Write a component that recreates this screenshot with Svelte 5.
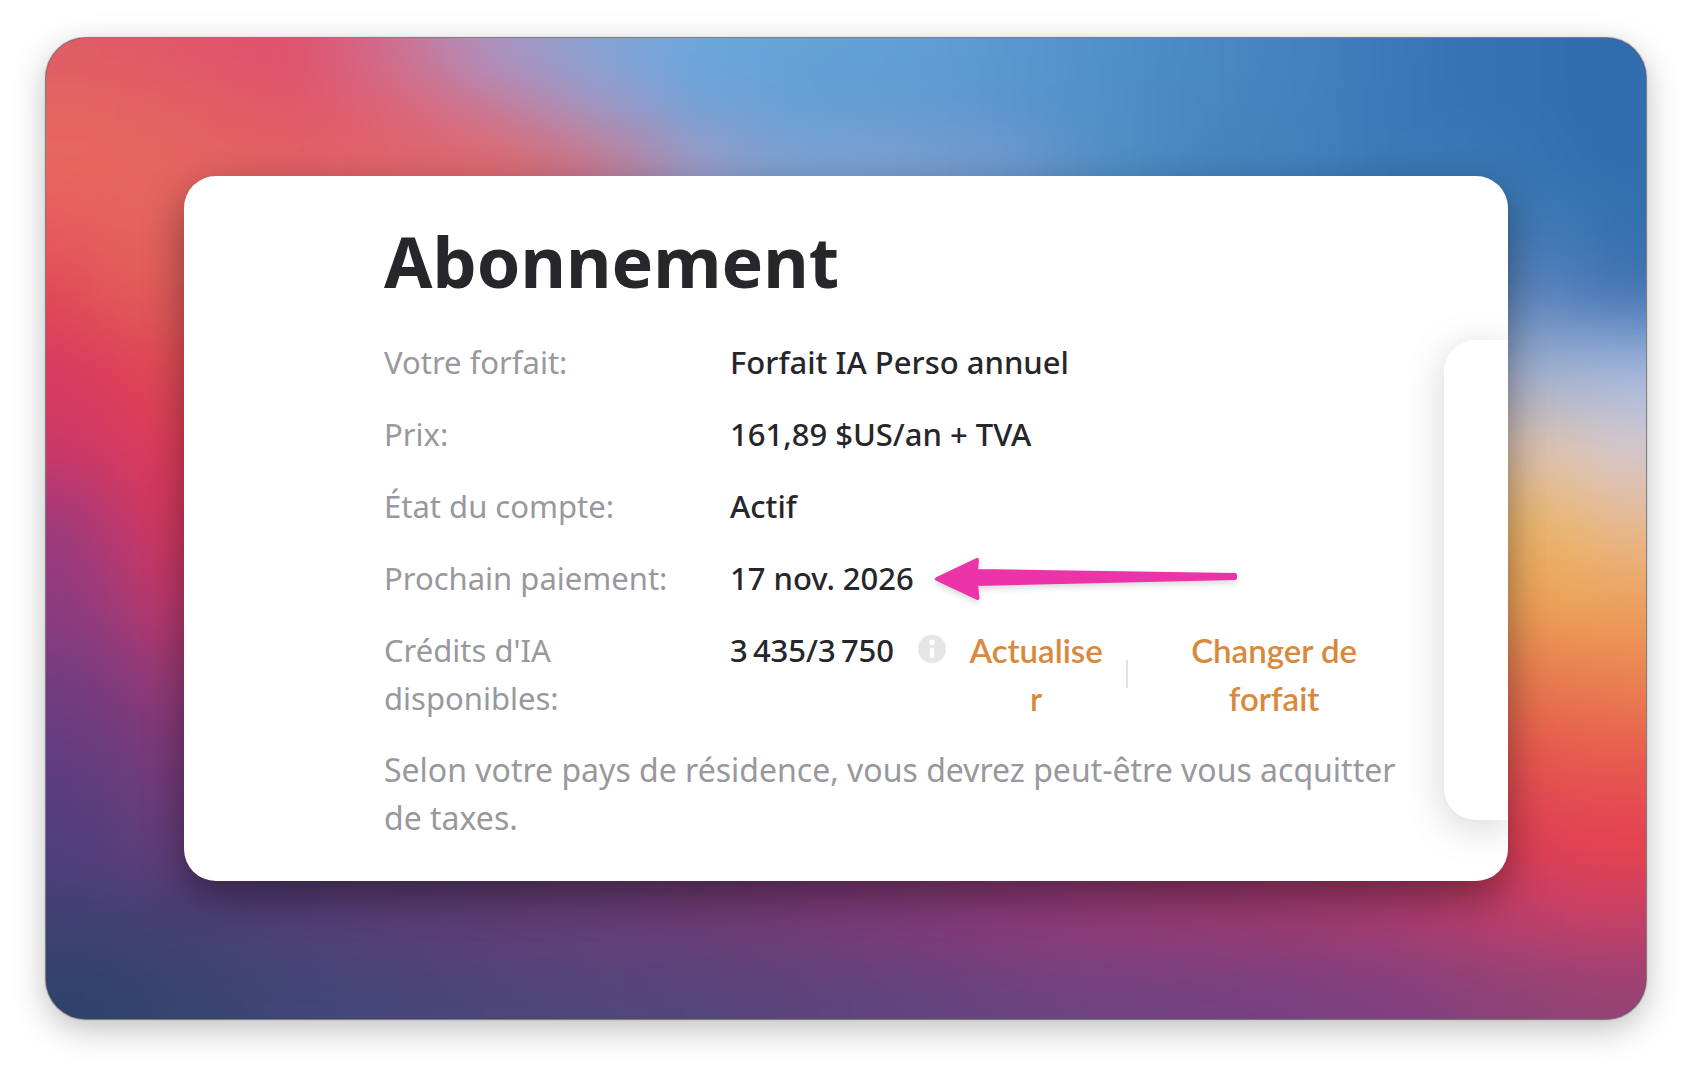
<script>
  const top = [
    ['de5c64', 'e0566b', 'e0526c', 'cd7092', 'ac94c2', '86a2d4', '6ca7dc', '65a2d6', '629fd4', '5b98d0', '5191ca', '4a8ac4', '4382bf', '3c78b8', '3470b2', '306cae'],
    ['e46560', 'e16063', 'df5868', 'dc6476', 'c8799a', 'a29ac6', '74a2d8', '659fd4', '629cd2', '5b96ce', '5090c8', '4888c2', '4281be', '3b77b8', '3672b2', '316daf'],
    ['e7675e', 'e36361', 'e16066', 'e0646c', 'dd696f', 'c67890', '9a9cc8', '7ba2d2', '7aa0d0', '7099ce', '5590c6', '4686be', '4480bc', '3c78b6', '3a75b4', '326eae']
  ];
  const bottom = [
    ['463f76', '4e3e76', '563c74', '5c3c74', '623c74', '683c76', '703a74', '7a3a76', '843a78', '8c3a78', '963a76', '9c3a70', 'a63a6e', 'b03c6c', 'c43d68', 'd04060'],
    ['3a416f', '414272', '4a4278', '524178', '5a4078', '5f4077', '633f78', '6a3f76', '743e7a', '7e3c7a', '843d7a', '883e7a', '8d3e78', '963f78', 'a44072', 'b04070'],
    ['2e426b', '39446f', '404578', '464679', '4b4679', '50467a', '53457a', '5a447a', '60457e', '68457f', '6e4380', '724180', '784080', '804080', '8a4278', '944274']
  ];
  const left = [
    ['e6605e', 'e4645e', 'e4645e'],
    ['e24a58', 'e25a58', 'e05c58'],
    ['d83a60', 'de3e58', 'e04a56'],
    ['cc3868', 'd43a60', 'de3c58'],
    ['9e3a7c', 'bc3870', 'd2385f'],
    ['8c3c7e', 'a03a78', 'c0386a'],
    ['743c80', '803a7c', '963a76'],
    ['613c80', '6a3c7c', '7a3a78'],
    ['503e7c', '583e7c', '643c7a']
  ];
  const right = [
    ['3c78b4', '3a75b4', '346fae'],
    ['5a84bc', '4f7cb8', '4474b4'],
    ['a0b0d0', 'a2b4d8', 'a4b8dc'],
    ['dcc0ac', 'dcc6bc', 'd4c8d0'],
    ['eab468', 'eab878', 'e8b890'],
    ['eca056', 'eca458', 'eca25c'],
    ['e6784e', 'e87c50', 'e98052'],
    ['e6544e', 'e7584e', 'e85a4e'],
    ['dc3e56', 'e04254', 'e24252']
  ];

  const channels = (hex) => [0, 2, 4].map((i) => parseInt(hex.slice(i, i + 2), 16));
  const clamp = (v, max) => Math.min(Math.max(v, 0), max);

  // Fills the area with small patches whose colours are interpolated between
  // the given stops; (ox, oy) is the first stop and (sx, sy) their spacing.
  function mesh(stops, ox, oy, sx, sy, area, cell) {
    const out = [];
    const [x0, y0, x1, y1] = area;
    for (let y = y0; y < y1; y += cell) {
      for (let x = x0; x < x1; x += cell) {
        const u = clamp((x + cell / 2 - ox) / sx, stops[0].length - 1);
        const v = clamp((y + cell / 2 - oy) / sy, stops.length - 1);
        const i = Math.floor(u), j = Math.floor(v);
        const i2 = Math.min(i + 1, stops[0].length - 1), j2 = Math.min(j + 1, stops.length - 1);
        const [a, b, c, d] = [stops[j][i], stops[j][i2], stops[j2][i], stops[j2][i2]].map(channels);
        const rgb = a.map((_, k) => {
          const t = a[k] + (b[k] - a[k]) * (u - i);
          const w = c[k] + (d[k] - c[k]) * (u - i);
          return Math.round(t + (w - t) * (v - j));
        });
        out.push({ x, y, fill: `rgb(${rgb.join(',')})` });
      }
    }
    return out;
  }

  const cell = 23;
  const patches = [
    ...mesh(top, 50, 23, 100, 46, [-69, -69, 1679, 210], cell),
    ...mesh(bottom, 50, 867, 100, 46, [-69, 800, 1679, 1060], cell),
    ...mesh(left, 23, 177, 46, 78, [-69, 148, 200, 830], cell),
    ...mesh(right, 1485, 177, 46, 78, [1403, 148, 1679, 830], cell)
  ];

  const rows = [
    { label: 'Votre forfait:', value: 'Forfait IA Perso annuel' },
    { label: 'Prix:', value: '161,89 $US/an + TVA' },
    { label: 'État du compte:', value: 'Actif' },
    { label: 'Prochain paiement:', value: '17 nov. 2026', arrow: true }
  ];
</script>

<main class="frame">
  <svg class="wallpaper" viewBox="0 0 1600 982" preserveAspectRatio="none" aria-hidden="true">
    <defs>
      <filter id="melt" filterUnits="userSpaceOnUse" x="-70" y="-70" width="1740" height="1122" color-interpolation-filters="sRGB">
        <feGaussianBlur stdDeviation="20" />
      </filter>
    </defs>
    <g filter="url(#melt)">
      {#each patches as p}
        <rect x={p.x} y={p.y} width={cell + 1} height={cell + 1} fill={p.fill} />
      {/each}
    </g>
  </svg>

  <section class="card">
    <div class="content">
      <h1>Abonnement</h1>
      <dl>
        {#each rows as row}
          <div class="row">
            <dt>{row.label}</dt>
            <dd>
              <span>{row.value}</span>
              {#if row.arrow}
                <svg class="arrow" width="304" height="44" viewBox="0 0 304 44" aria-hidden="true">
                  <path d="M3 22 L43 3 L42 14 L301 18 V21 L42 27 L43.500 41 Z" fill="#ea34a8" stroke="#ea34a8" stroke-width="4" stroke-linejoin="round" />
                </svg>
              {/if}
            </dd>
          </div>
        {/each}
        <div class="row">
          <dt>Crédits d'IA disponibles:</dt>
          <dd>
            <span>3&#8239;435/3&#8239;750</span>
            <button class="info" aria-label="Informations sur les crédits">
              <svg width="28" height="28" viewBox="0 0 28 28" aria-hidden="true">
                <circle cx="14" cy="14" r="14" fill="#e5e5e5" />
                <circle cx="14" cy="7.500" r="2.700" fill="#fff" />
                <rect x="11.800" y="12.500" width="4.400" height="10.500" rx="2.200" fill="#fff" />
              </svg>
            </button>
            <button class="action refresh">Actualiser</button>
            <span class="divider"></span>
            <button class="action change">Changer de forfait</button>
          </dd>
        </div>
      </dl>
      <p>Selon votre pays de résidence, vous devrez peut-être vous acquitter de taxes.</p>
    </div>
    <aside class="panel"></aside>
  </section>
</main>

<style>
  :global(body) {
    background: #fff;
  }
  .frame {
    position: relative;
    margin: 38px 46px 54px;
    padding: 138px;
    border-radius: 40px;
    background: #6f3a72;
    box-shadow: 0 0 1px 1px rgba(90, 90, 90, 0.8), 0 10px 34px rgba(0, 0, 0, 0.26);
    font-family: 'Noto Sans', sans-serif;
    font-size: 31px;
    line-height: 48px;
    color: #26262b;
  }
  .wallpaper {
    position: absolute;
    inset: 0;
    width: 100%;
    height: 100%;
    border-radius: 40px;
    overflow: hidden;
  }
  .card {
    position: relative;
    display: flex;
    justify-content: space-between;
    border-radius: 32px;
    background: #fff;
    box-shadow: 0 16px 40px rgba(0, 0, 0, 0.4);
    overflow: hidden;
  }
  .content {
    flex: 1;
    min-width: 0;
    padding: 40px 40px 39px 200px;
  }
  h1 {
    margin: 0 0 32px;
    font-size: 70px;
    line-height: 90px;
    font-weight: 700;
  }
  dl {
    display: grid;
    gap: 24px;
    margin: 0 0 24px;
  }
  .row {
    display: grid;
    grid-template-columns: 300px minmax(0, 1fr);
    column-gap: 46px;
  }
  dt,
  p {
    margin: 0;
    color: #98989d;
  }
  p {
    font-size: 32px;
  }
  dd {
    display: flex;
    align-items: flex-start;
    margin: 0;
    font-weight: 500;
    white-space: nowrap;
  }
  .arrow {
    margin: 3px 0 0 20px;
    filter: drop-shadow(0 3px 3px rgba(0, 0, 0, 0.15));
  }
  button {
    padding: 0;
    border: 0;
    background: none;
    font: inherit;
    cursor: pointer;
  }
  .info {
    display: flex;
    margin: 9px 20px 0 24px;
  }
  .action {
    color: #d9893c;
    font-family: Lato, sans-serif;
    font-size: 33px;
    font-weight: 600;
    text-align: center;
    white-space: normal;
  }
  .refresh {
    width: 140px;
    overflow-wrap: anywhere;
  }
  .divider {
    flex: none;
    align-self: center;
    width: 2px;
    height: 28px;
    margin: 0 20px;
    background: #e2e2e2;
  }
  .change {
    width: 252px;
    padding: 0 30px;
  }
  .panel {
    flex: none;
    width: 64px;
    height: 480px;
    margin-top: 164px;
    border-radius: 32px 0 0 32px;
    background: #fff;
    box-shadow: 0 8px 40px rgba(0, 0, 0, 0.17);
  }
</style>
